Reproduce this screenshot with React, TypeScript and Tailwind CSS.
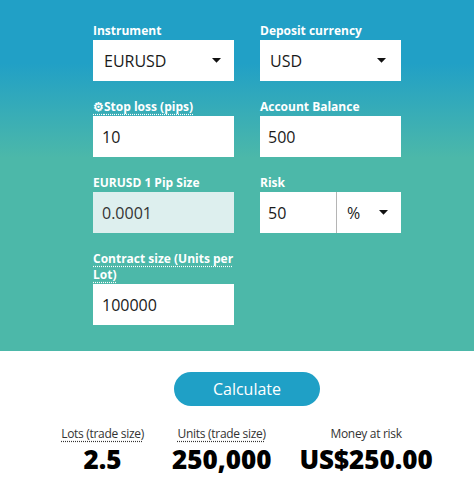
import React from "react";

const Caret = () => (
  <svg width="9" height="5" viewBox="0 0 9 5" className="shrink-0">
    <path d="M0 0 L9 0 L4.5 4.8 Z" fill="#111" />
  </svg>
);

const Label = ({ children, dotted }: { children: React.ReactNode; dotted?: boolean }) => (
  <div className="mb-[1px] text-[12px] font-bold leading-[16px] text-white">
    <span className={dotted ? "underline decoration-dotted decoration-white underline-offset-[3px]" : ""}>
      {children}
    </span>
  </div>
);

export default function App() {
  return (
    <div className="w-full bg-white" style={{ fontFamily: '"Open Sans", "Liberation Sans", sans-serif' }}>
      <div className="bg-[linear-gradient(180deg,#21a0c6_18%,#4cb8a9_45%,#4cb8a9_100%)] pb-[26px] pl-[20px] pt-[23px]">
        <div className="flex justify-center">
          <div className="grid grid-cols-[141px_141px] gap-x-[26px] gap-y-[18px]">
            <div>
              <Label>Instrument</Label>
              <div className="flex h-[41px] items-center justify-between bg-white pl-[11px] pr-[13px] text-[16px] text-[#1a1a1a]">
                <span>EURUSD</span>
                <Caret />
              </div>
            </div>
            <div>
              <Label>Deposit currency</Label>
              <div className="flex h-[41px] items-center justify-between bg-white pl-[10px] pr-[15px] text-[16px] text-[#1a1a1a]">
                <span>USD</span>
                <Caret />
              </div>
            </div>
            <div>
              <Label>
                <span className="underline decoration-dotted decoration-white underline-offset-[3px]">
                  <span className="text-[12px]">⚙</span>Stop loss (pips)
                </span>
              </Label>
              <div className="flex h-[41px] items-center bg-white pl-[9px] text-[16px] text-[#1a1a1a]">10</div>
            </div>
            <div>
              <Label>Account Balance</Label>
              <div className="flex h-[41px] items-center bg-white pl-[8px] text-[16px] text-[#1a1a1a]">500</div>
            </div>
            <div>
              <Label>EURUSD 1 Pip Size</Label>
              <div className="flex h-[41px] items-center bg-[#ddefee] pl-[9px] text-[16px] text-[#333]">0.0001</div>
            </div>
            <div>
              <Label>Risk</Label>
              <div className="flex h-[41px] bg-white text-[16px] text-[#1a1a1a]">
                <div className="flex w-[76px] items-center pl-[8px]">50</div>
                <div className="flex flex-1 items-center justify-between border-l border-[#b5b5b5] pl-[10px] pr-[13px]">
                  <span>%</span>
                  <Caret />
                </div>
              </div>
            </div>
            <div>
              <Label dotted>Contract size (Units per Lot)</Label>
              <div className="flex h-[41px] items-center bg-white pl-[9px] text-[16px] text-[#1a1a1a]">100000</div>
            </div>
            <div />
          </div>
        </div>
      </div>
      <div className="pb-[10px] pl-[20px] pt-[21px]">
        <div className="flex justify-center">
          <button className="h-[34px] w-[146px] rounded-full bg-[#1fa0c6] text-[16px] text-white">Calculate</button>
        </div>
        <div className="mt-[19px] flex justify-center gap-x-[28px] text-center">
          <div className="flex flex-col items-center">
            <span className="text-[12px] leading-[18px] tracking-[-0.3px] text-[#333] underline decoration-dotted underline-offset-[3px]">
              Lots (trade size)
            </span>
            <span className="mt-[1px] text-[26px] font-extrabold leading-[30px] text-black">2.5</span>
          </div>
          <div className="flex flex-col items-center">
            <span className="text-[12px] leading-[18px] tracking-[-0.3px] text-[#333] underline decoration-dotted underline-offset-[3px]">
              Units (trade size)
            </span>
            <span className="mt-[1px] text-[26px] font-extrabold leading-[30px] text-black">250,000</span>
          </div>
          <div className="flex flex-col items-center">
            <span className="text-[12px] leading-[18px] tracking-[-0.3px] text-[#333]">Money at risk</span>
            <span className="mt-[1px] text-[26px] font-extrabold leading-[30px] text-black">US$250.00</span>
          </div>
        </div>
      </div>
    </div>
  );
}
